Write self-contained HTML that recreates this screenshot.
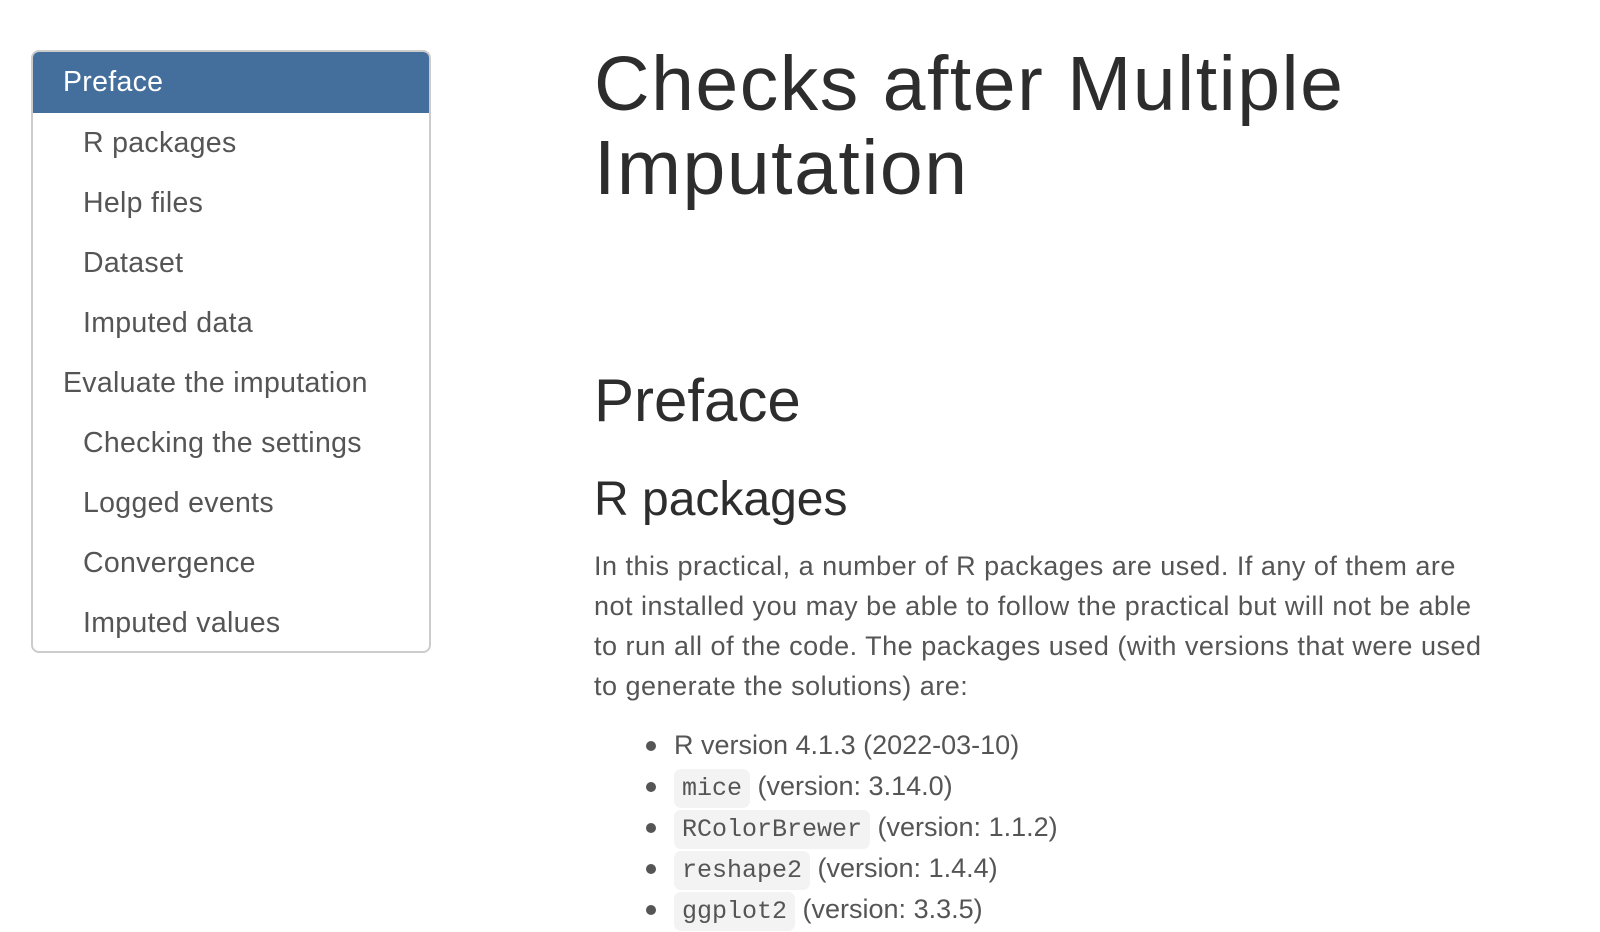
<!DOCTYPE html>
<html><head><meta charset="utf-8"><style>
body{margin:0;width:1600px;height:900px;overflow:hidden;background:#fff;font-family:"Liberation Sans","DejaVu Sans",sans-serif;color:#555}
.side{position:absolute;left:31px;top:50px;width:396px;height:599px;border:2px solid #ccc;border-radius:8px;overflow:hidden}
.side div{height:60px;line-height:60px;font-size:28.5px;padding-left:30px;color:#555;letter-spacing:0.3px}
.side div.s{padding-left:50px}
.side div.a{background:#446e9b;color:#fff;height:61px}
.main{position:absolute;left:594px;top:0;width:960px}
h1{font-weight:normal;font-size:77px;line-height:84px;margin:0;position:absolute;top:42px;color:#2d2d2d;letter-spacing:1.5px;white-space:nowrap}
h2{font-weight:normal;font-size:60px;margin:0;position:absolute;top:366px;color:#2d2d2d}
h3{font-weight:normal;font-size:48px;margin:0;position:absolute;top:472px;color:#2d2d2d}
p{position:absolute;top:546px;margin:0;font-size:27px;line-height:40px;width:960px;white-space:nowrap;letter-spacing:0.5px}
ul{position:absolute;top:725px;margin:0;padding-left:80px;font-size:27px;list-style:none;white-space:nowrap}
li{height:41px;line-height:41px;position:relative}
li:before{content:"";position:absolute;left:-28px;top:16px;width:10px;height:10px;border-radius:50%;background:#555}
code{font-family:"Liberation Mono",monospace;font-size:25px;background:#f3f3f3;border-radius:7px;padding:5px 8px;color:#555}
</style></head><body>
<div class="side">
<div class="a">Preface</div>
<div class="s">R packages</div>
<div class="s">Help files</div>
<div class="s">Dataset</div>
<div class="s">Imputed data</div>
<div>Evaluate the imputation</div>
<div class="s">Checking the settings</div>
<div class="s">Logged events</div>
<div class="s">Convergence</div>
<div class="s">Imputed values</div>
</div>
<div class="main">
<h1>Checks after Multiple<br>Imputation</h1>
<h2>Preface</h2>
<h3>R packages</h3>
<p>In this practical, a number of R packages are used. If any of them are<br>not installed you may be able to follow the practical but will not be able<br>to run all of the code. The packages used (with versions that were used<br>to generate the solutions) are:</p>
<ul>
<li>R version 4.1.3 (2022-03-10)</li>
<li><code>mice</code> (version: 3.14.0)</li>
<li><code>RColorBrewer</code> (version: 1.1.2)</li>
<li><code>reshape2</code> (version: 1.4.4)</li>
<li><code>ggplot2</code> (version: 3.3.5)</li>
</ul>
</div>
</body></html>
